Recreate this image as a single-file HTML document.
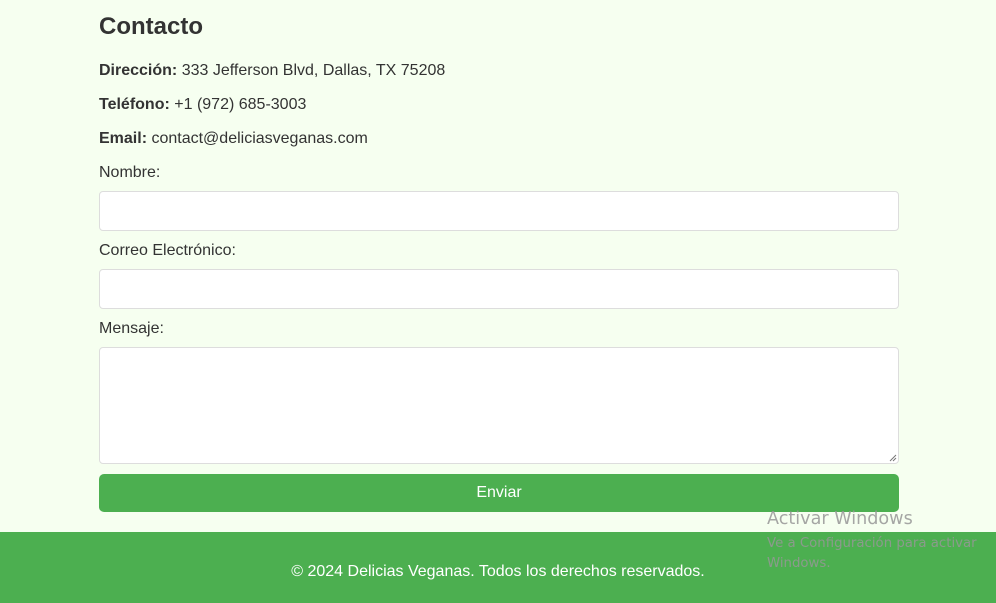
<!DOCTYPE html>
<html><head><meta charset="utf-8"><style>
html,body{margin:0;padding:0}
body{width:996px;height:603px;background:#f6fff0;font-family:"Liberation Sans",Arial,sans-serif;color:#333;position:relative;overflow:hidden;font-size:16px}
h2{position:absolute;left:99px;top:12px;margin:0;font-size:24px;font-weight:bold;line-height:30px}
.p{position:absolute;left:99px;line-height:20px}
.in{position:absolute;left:99px;width:798px;background:#fff;border:1px solid #ddd;border-radius:4px}
.btn{position:absolute;left:99px;top:474px;width:800px;height:38px;background:#4caf50;border-radius:5px;color:#fff;text-align:center;line-height:38px}
footer{position:absolute;left:0;top:532px;width:996px;height:71px;background:#4caf50;color:#fff;text-align:center;line-height:20px}
.wm{position:absolute;left:767px;color:rgba(150,150,150,.85);font-family:"DejaVu Sans",sans-serif}
</style></head><body>
<h2>Contacto</h2>
<div class="p" style="top:61px"><b>Dirección:</b> 333 Jefferson Blvd, Dallas, TX 75208</div>
<div class="p" style="top:95px"><b>Teléfono:</b> +1 (972) 685-3003</div>
<div class="p" style="top:129px"><b>Email:</b> contact@deliciasveganas.com</div>
<div class="p" style="top:163px">Nombre:</div>
<div class="in" style="top:191px;height:38px"></div>
<div class="p" style="top:241px">Correo Electrónico:</div>
<div class="in" style="top:269px;height:38px"></div>
<div class="p" style="top:319px">Mensaje:</div>
<div class="in" style="top:347px;height:115px"><svg style="position:absolute;right:1px;bottom:1px" width="9" height="9"><path d="M8 2L2 8M8 5L5 8" stroke="#777" stroke-width="1"/></svg></div>
<div class="btn">Enviar</div>
<footer><div style="position:absolute;top:30px;width:100%">© 2024 Delicias Veganas. Todos los derechos reservados.</div></footer>
<div class="wm" style="top:509px;font-size:17.6px">Activar Windows</div>
<div class="wm" style="top:534px;font-size:13.3px;line-height:20px">Ve a Configuración para activar<br>Windows.</div>
</body></html>
